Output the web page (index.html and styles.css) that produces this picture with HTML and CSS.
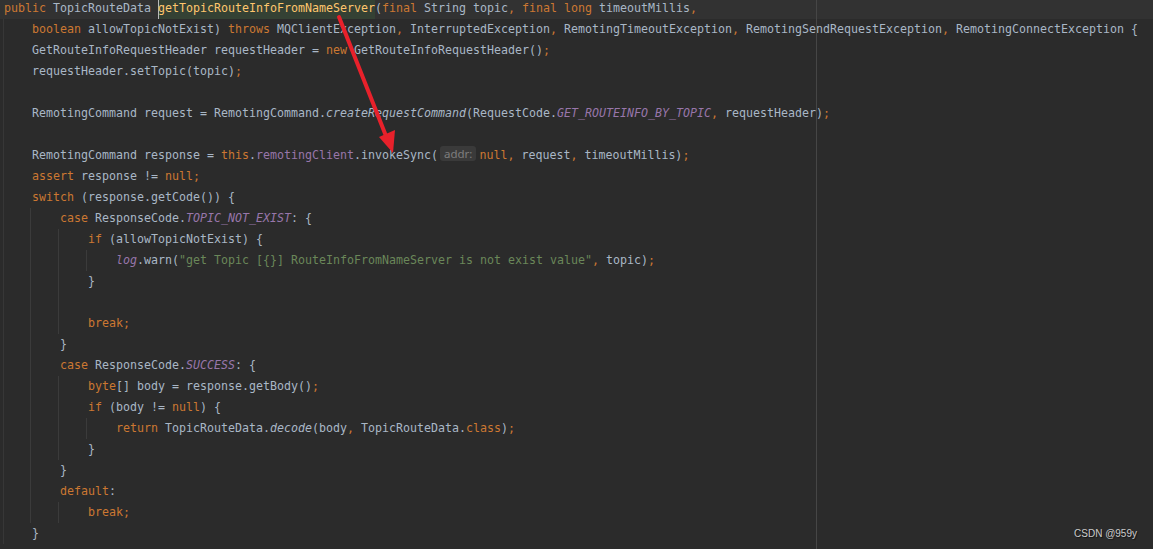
FILE: index.html
```html
<!DOCTYPE html>
<html lang="en">
<head>
    <meta charset="UTF-8">
    <title>TopicRouteData - editor</title>
    <link rel="stylesheet" href="styles.css">
</head>
<body>
    <div class="editor">
        <div class="line caret-row"><span class="kw">public</span> TopicRouteData <span class="ident-hl"><span class="fn">getTopicRouteInfoFromNameServer</span></span>(<span class="kw">final</span> String topic<span class="kw">,</span> <span class="kw">final long</span> timeoutMillis<span class="kw">,</span></div>
        <div class="line d0">    <span class="kw">boolean</span> allowTopicNotExist) <span class="kw">throws</span> MQClientException<span class="kw">,</span> InterruptedException<span class="kw">,</span> RemotingTimeoutException<span class="kw">,</span> RemotingSendRequestException<span class="kw">,</span> RemotingConnectException {</div>
        <div class="line d0">    GetRouteInfoRequestHeader requestHeader = <span class="kw">new</span> GetRouteInfoRequestHeader()<span class="kw">;</span></div>
        <div class="line d0">    requestHeader.setTopic(topic)<span class="kw">;</span></div>
        <div class="line d0"></div>
        <div class="line d0">    RemotingCommand request = RemotingCommand.<span class="it">createRequestCommand</span>(RequestCode.<span class="const">GET_ROUTEINFO_BY_TOPIC</span><span class="kw">,</span> requestHeader)<span class="kw">;</span></div>
        <div class="line d0"></div>
        <div class="line d0">    RemotingCommand response = <span class="kw">this</span>.<span class="field">remotingClient</span>.invokeSync(<span class="hint">addr:</span><span class="kw">null, </span>request<span class="kw">,</span> timeoutMillis)<span class="kw">;</span></div>
        <div class="line d0">    <span class="kw">assert</span> response != <span class="kw">null;</span></div>
        <div class="line d0">    <span class="kw">switch</span> (response.getCode()) {</div>
        <div class="line d0 d1">        <span class="kw">case</span> ResponseCode.<span class="const">TOPIC_NOT_EXIST</span>: {</div>
        <div class="line d0 d1 d2">            <span class="kw">if</span> (allowTopicNotExist) {</div>
        <div class="line d0 d1 d2 d3">                <span class="field it">log</span>.warn(<span class="str">"get Topic [{}] RouteInfoFromNameServer is not exist value"</span><span class="kw">,</span> topic)<span class="kw">;</span></div>
        <div class="line d0 d1 d2">            }</div>
        <div class="line d0 d1 d2"></div>
        <div class="line d0 d1 d2">            <span class="kw">break;</span></div>
        <div class="line d0 d1">        }</div>
        <div class="line d0 d1">        <span class="kw">case</span> ResponseCode.<span class="const">SUCCESS</span>: {</div>
        <div class="line d0 d1 d2">            <span class="kw">byte</span>[] body = response.getBody()<span class="kw">;</span></div>
        <div class="line d0 d1 d2">            <span class="kw">if</span> (body != <span class="kw">null</span>) {</div>
        <div class="line d0 d1 d2 d3">                <span class="kw">return</span> TopicRouteData.<span class="it">decode</span>(body<span class="kw">,</span> TopicRouteData.<span class="kw">class</span>)<span class="kw">;</span></div>
        <div class="line d0 d1 d2">            }</div>
        <div class="line d0 d1">        }</div>
        <div class="line d0 d1">        <span class="kw">default</span>:</div>
        <div class="line d0 d1 d2">            <span class="kw">break;</span></div>
        <div class="line d0">    }</div>
    </div>

    <svg class="arrow" width="1153" height="549" viewBox="0 0 1153 549">
        <line x1="339" y1="17" x2="386" y2="136" stroke="#e8212b" stroke-width="4" stroke-linecap="round"/>
        <polygon points="379,137 395,130 393,153" fill="#e8212b"/>
    </svg>

    <div class="watermark">CSDN @959y</div>
</body>
</html>
```

FILE: styles.css
```css
html, body {
    margin: 0;
    padding: 0;
    background: #2b2b2b;
    overflow: hidden;
}
body {
    width: 1153px;
    height: 549px;
    position: relative;
}
.editor {
    position: relative;
    margin-top: -2px;
    font-family: "DejaVu Sans Mono", monospace;
    font-size: 11.63px;
    color: #a9b7c6;
}
/* right margin guide */
.editor::after {
    content: "";
    position: absolute;
    left: 816px;
    top: 0;
    width: 1px;
    height: 560px;
    background: #464646;
}
.line {
    height: 21px;
    line-height: 21px;
    padding-left: 4px;
    white-space: pre;
    background-repeat: no-repeat;
}
.caret-row {
    background-color: #323232;
}
/* indent guides */
.d0 { background-image: linear-gradient(#373737, #373737); background-position: 3px 0; background-size: 1px 100%; }
.d0.d1 {
    background-image: linear-gradient(#373737, #373737), linear-gradient(#3b3b3b, #3b3b3b);
    background-position: 3px 0, 30px 0;
    background-size: 1px 100%, 1px 100%;
}
.d0.d1.d2 {
    background-image: linear-gradient(#373737, #373737), linear-gradient(#3b3b3b, #3b3b3b), linear-gradient(#3b3b3b, #3b3b3b);
    background-position: 3px 0, 30px 0, 58px 0;
    background-size: 1px 100%, 1px 100%, 1px 100%;
}
.d0.d1.d2.d3 {
    background-image: linear-gradient(#373737, #373737), linear-gradient(#3b3b3b, #3b3b3b), linear-gradient(#3b3b3b, #3b3b3b), linear-gradient(#3b3b3b, #3b3b3b);
    background-position: 3px 0, 30px 0, 58px 0, 86px 0;
    background-size: 1px 100%, 1px 100%, 1px 100%, 1px 100%;
}
.kw { color: #cc7832; }
.str { color: #6a8759; }
.field { color: #9876aa; }
.const { color: #9876aa; font-style: italic; }
.it { font-style: italic; }
.fn { color: #ffc66d; }
.ident-hl {
    display: inline-block;
    height: 21px;
    vertical-align: top;
    background: #344134;
    box-shadow: inset 1px 0 0 #bbbbbb;
}
.hint {
    display: inline-block;
    height: 15px;
    line-height: 15px;
    padding: 0 4px;
    margin: 0 3px 0 2px;
    border-radius: 3px;
    background: #3a3a3a;
    color: #7e7e7e;
    font-family: "Noto Sans", sans-serif;
    font-size: 11.5px;
    vertical-align: 1px;
}
.arrow {
    position: absolute;
    left: 0;
    top: 0;
    pointer-events: none;
}
.watermark {
    position: absolute;
    right: 16px;
    bottom: 10px;
    font-family: "Liberation Sans", Arial, sans-serif;
    font-size: 10px;
    color: rgba(235, 235, 235, 0.85);
    text-shadow: 1px 1px 1px rgba(0, 0, 0, 0.6);
}
```
